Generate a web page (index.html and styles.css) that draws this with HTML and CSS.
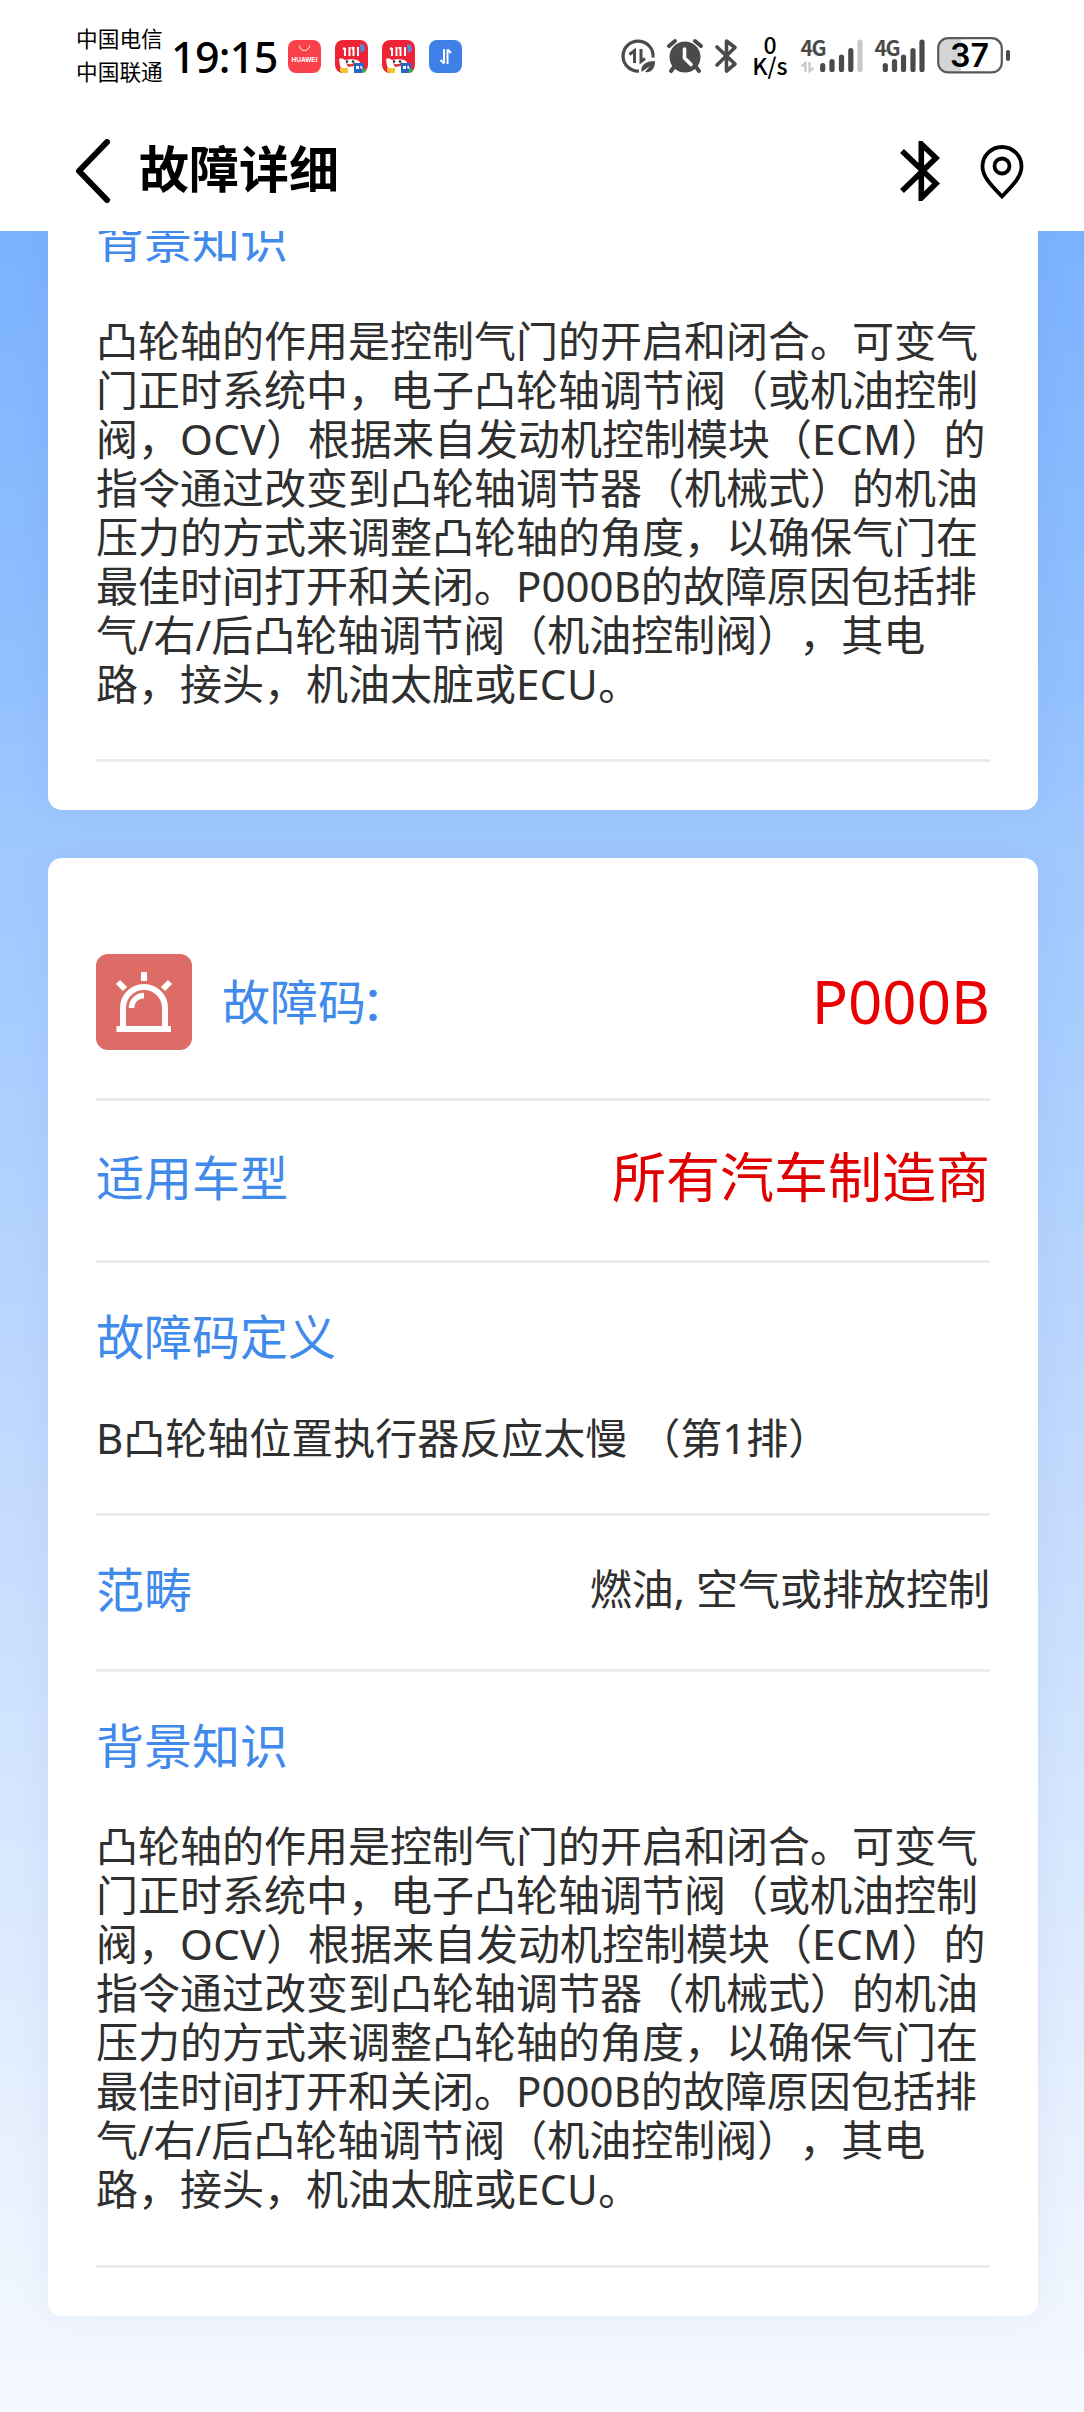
FILE: index.html
```html
<!DOCTYPE html>
<html lang="zh-CN">
<head>
<meta charset="utf-8">
<title>故障详细</title>
<link rel="stylesheet" href="styles.css">
</head>
<body>
<div class="screen">
  <header class="top">
    <div class="status">
      <div class="carriers"><span>中国电信</span><span>中国联通</span></div>
      <div class="time">19:15</div>
      <div class="apps">
        <svg class="app" viewBox="0 0 33 33"><rect width="33" height="33" rx="8" fill="#f9414b"/><path d="M11.500 5.500a5 5 0 0 0 10 0" fill="none" stroke="#fff" stroke-width="1"/><text x="16.500" y="21.500" class="brand" textLength="26" lengthAdjust="spacingAndGlyphs">HUAWEI</text></svg>
        <svg class="app" viewBox="0 0 33 33"><use href="#promo"/></svg>
        <svg class="app" viewBox="0 0 33 33"><use href="#promo"/></svg>
        <svg class="app" viewBox="0 0 33 33"><rect width="33" height="33" rx="8" fill="#3f7fe8"/><path d="M15 9v14.500M15 23.500l-3.500-3.500M18.500 24V9.500M18.500 9.500l3.500 3.500" fill="none" stroke="#fff" stroke-width="2"/></svg>
      </div>
      <div class="system">
        <svg class="s-data" viewBox="0 0 34 34" width="34" height="34"><path d="M18 32A15 15 0 1 1 32 18.500" fill="none" stroke="#4a4a4a" stroke-width="3.200"/><path d="M13.500 24V11.500L8.500 15.500M20 10v12.500l4-3" fill="none" stroke="#4a4a4a" stroke-width="3"/><path d="M20.500 33c-1-7 4-11 13.500-11 0 8-4 12-10 11l5-6-8.500 6z" fill="#4a4a4a"/></svg>
        <svg class="s-alarm" viewBox="0 0 36 34" width="36" height="34"><circle cx="18" cy="18" r="15.500" fill="#4a4a4a"/><path d="M2 7l6-5M34 7l-6-5M7 28l-3 4M29 28l3 4" stroke="#4a4a4a" stroke-width="4" stroke-linecap="round"/><path d="M17.500 10v9l6.500 6.500" fill="none" stroke="#fff" stroke-width="3.600" stroke-linecap="round"/></svg>
        <svg class="s-bt" viewBox="0 0 22 34" width="22" height="34"><path d="M2 8l18 17-8.500 7V2L20 8.500 2 26" fill="none" stroke="#4a4a4a" stroke-width="3.600" stroke-linejoin="round" stroke-linecap="round"/></svg>
        <div class="speed"><span>0</span><span>K/s</span></div>
        <svg class="s-sim" viewBox="0 0 62 34" width="62" height="34"><text x="-.5" y="16.500" class="net" textLength="26">4G</text><path d="M4.500 33v-9L.5 27.500M8.500 23v9l4-3" fill="none" stroke="#c8c8c8" stroke-width="2.200"/><path d="M21.700 26.500v4M31 22.500v8M40.500 18v12.500M49.800 11.500v19" stroke="#4a4a4a" stroke-width="5.200" stroke-linecap="round"/><path d="M59 3v27.500" stroke="#c8c8c8" stroke-width="5.200" stroke-linecap="round"/></svg>
        <svg class="s-sim2" viewBox="0 0 50 34" width="50" height="34"><text x="-.5" y="16.500" class="net" textLength="26">4G</text><path d="M10.300 26.500v4M19.500 22.500v8M28.500 18v12.500M38 11.500v19M47 3v27.500" stroke="#4a4a4a" stroke-width="5.200" stroke-linecap="round"/></svg>
        <svg class="s-batt" viewBox="0 0 74 37" width="74" height="37"><path d="M13 2h11v33H13A11 11 0 0 1 2 24V13A11 11 0 0 1 13 2z" fill="#d4d4d4"/><rect x="1.200" y="1.200" width="63.600" height="34.200" rx="10" fill="none" stroke="#5a5a5a" stroke-width="2.200"/><rect x="69" y="13" width="4" height="11" rx="2" fill="#4a4a4a"/><text x="32.500" y="29.500" class="level">37</text></svg>
      </div>
    </div>
    <nav class="bar">
      <svg class="back" viewBox="0 0 36 64" width="36" height="64"><path d="M32 3L4 32l28 29" fill="none" stroke="#000" stroke-width="6" stroke-linecap="round" stroke-linejoin="round"/></svg>
      <h1 class="title">故障详细</h1>
      <svg class="bt" viewBox="0 0 40 60" width="40" height="60"><path d="M2 10l34 32.500-14.700 14.500V3L36 17 2 50" fill="none" stroke="#000" stroke-width="5.600"/></svg>
      <svg class="pin" viewBox="0 0 44 54" width="44" height="54"><path d="M22 51.500C12 41 2.500 32 2.500 21.500a19.500 19.500 0 0 1 39 0C41.500 32 32 41 22 51.500z" fill="none" stroke="#000" stroke-width="3.800"/><circle cx="22" cy="21" r="7.500" fill="none" stroke="#000" stroke-width="3.800"/></svg>
    </nav>
  </header>

  <main class="list">
    <section class="card card-cut">
      <div class="block last">
        <h2 class="label">背景知识</h2>
        <p class="text">凸轮轴的作用是控制气门的开启和闭合。可变气<br>门正时系统中，电子凸轮轴调节阀（或机油控制<br>阀，<span class="lat">OCV</span>）根据来自发动机控制模块（<span class="lat">ECM</span>）的<br>指令通过改变到凸轮轴调节器（机械式）的机油<br>压力的方式来调整凸轮轴的角度，以确保气门在<br>最佳时间打开和关闭。P000B的故障原因包括排<br>气/右/后凸轮轴调节阀（机油控制阀），其电<br>路，接头，机油太脏或<span class="lat">ECU</span>。</p>
      </div>
    </section>

    <section class="card">
      <div class="row row-code">
        <svg class="siren" viewBox="0 0 96 96" width="96" height="96"><rect width="96" height="96" rx="12" fill="#dd6c67"/><path d="M27 73V54a21 21 0 0 1 42 0v19" fill="none" stroke="#fff" stroke-width="6"/><path d="M20.500 75h54.500M48 18v9M22 28l7 7M74 28l-7 7" fill="none" stroke="#fff" stroke-width="6"/><path d="M35.500 54A12.500 12.500 0 0 1 48 41.500" fill="none" stroke="#fff" stroke-width="5.500"/></svg>
        <span class="label">故障码<span class="colon">：</span></span>
        <span class="code">P000B</span>
      </div>
      <div class="row row-model"><span class="label">适用车型</span><span class="maker">所有汽车制造商</span></div>
      <div class="block block-def">
        <h2 class="label">故障码定义</h2>
        <p class="text">B凸轮轴位置执行器反应太慢 （第1排）</p>
      </div>
      <div class="row row-scope"><span class="label">范畴</span><span class="text">燃油, 空气或排放控制</span></div>
      <div class="block last">
        <h2 class="label">背景知识</h2>
        <p class="text">凸轮轴的作用是控制气门的开启和闭合。可变气<br>门正时系统中，电子凸轮轴调节阀（或机油控制<br>阀，<span class="lat">OCV</span>）根据来自发动机控制模块（<span class="lat">ECM</span>）的<br>指令通过改变到凸轮轴调节器（机械式）的机油<br>压力的方式来调整凸轮轴的角度，以确保气门在<br>最佳时间打开和关闭。P000B的故障原因包括排<br>气/右/后凸轮轴调节阀（机油控制阀），其电<br>路，接头，机油太脏或<span class="lat">ECU</span>。</p>
      </div>
    </section>
  </main>
</div>

<svg width="0" height="0" class="defs">
  <symbol id="promo" viewBox="0 0 33 33">
    <rect width="33" height="33" rx="8" fill="#ee2436"/>
    <path d="M25 4l4 1 1 5-4 3z" fill="#4b8fe0"/>
    <path d="M4 19c3-2 4 0 6 1 4-1 9-1 12 0 3 1 4 4 3 7l-3 6H9l-4-7z" fill="#fff"/>
    <path d="M11 23q5 3 9-1l-1 4-6 1z" fill="#d93636"/>
    <circle cx="12" cy="21.500" r="1.200" fill="#222"/><circle cx="18" cy="21.500" r="1.200" fill="#222"/>
    <path d="M10 8v8M14.500 7v9M18.500 7v9M23 7v9M8 9l2-1M16.500 8.500l2-1" stroke="#fff" stroke-width="2"/>
    <path d="M5 28h8v5H8a5 5 0 0 1-3-2z" fill="#f7c52e"/>
    <path d="M19 23h10v7l-3 3h-7z" fill="#2466c8"/>
    <path d="M27 29h5q-1 4-5 4z" fill="#45a84a"/>
    <path d="M21 26h3v3h-3zM25 28l1-3 2 4" fill="#fff"/>
  </symbol>
</svg>
</body>
</html>
```
FILE: styles.css
```css
* { box-sizing: border-box; margin: 0; padding: 0; }
body {
  width: 1084px;
  font-family: "Noto Sans", "Noto Sans CJK SC", sans-serif;
  color: #2f2f2f;
  background: #fff;
  text-spacing-trim: space-all;
}
.defs { display: none; }
.screen {
  height: 2412px;
  overflow: hidden;
  display: flex;
  flex-direction: column;
}
.top { flex: none; height: 231px; background: #fff; color: #000; }

/* status bar */
.status { height: 110px; padding: 0 72px 0 76px; display: flex; align-items: flex-start; }
.carriers {
  width: 95px; padding-top: 21px;
  display: flex; flex-direction: column;
  font: 21.7px/33px "Noto Sans CJK SC", sans-serif;
}
.time { width: 117px; margin-top: 27px; font: 500 43px/60px "Noto Sans", sans-serif; letter-spacing: -.7px; }
.apps { display: flex; gap: 14px; padding-top: 40px; }
.app { width: 33px; height: 33px; display: block; }
.brand { font: 700 6.5px "Liberation Sans", sans-serif; fill: #fff; text-anchor: middle; }
.system { margin-left: 159px; display: flex; align-items: flex-start; padding-top: 39px; }
.system svg { display: block; flex: none; overflow: visible; }
.s-data { margin-right: 12px; }
.s-alarm { margin-right: 12px; }
.s-bt { margin-right: 14px; }
.speed {
  width: 38px; margin: -5px 12px 0 0;
  display: flex; flex-direction: column; align-items: center;
  font: 500 23px/21px "Noto Sans CJK SC", sans-serif;
}
.s-sim { margin-right: 12px; }
.s-sim2 { margin-right: 12px; }
.s-batt { margin-top: -2px; }
.net { font: 700 21px "Noto Sans CJK SC", sans-serif; fill: #4a4a4a; }
.level { font: 600 32px Inter, sans-serif; text-anchor: middle; fill: #000; }

/* title bar */
.bar { height: 121px; padding: 0 60px 0 75px; display: flex; align-items: center; }
.back { margin-right: 28px; }
.title { flex: 1; padding-bottom: 9px; font: 700 50px/64px "Noto Sans CJK SC", sans-serif; }
.bt { margin-right: 40px; }
.pin { margin-top: 3px; }

/* scrolling list */
.list {
  flex: 1; min-height: 0; overflow: hidden;
  padding: 0 46px 0 48px;
  display: flex; flex-direction: column; gap: 48px;
  background: linear-gradient(#7bb2ff, #91c0ff 20%, #9fc8ff 28%, #a9ceff 38%, #c4dbfe 58%, #d4e6ff 72%, #e5effe 86%, #f0f6ff 95%, #f5f9ff);
}
.card {
  flex: none;
  padding: 48px;
  border-radius: 14px;
  background: #fff;
  box-shadow: 0 0 36px rgba(60, 60, 100, .06);
}
.card-cut { padding-top: 0; border-radius: 0 0 14px 14px; }
.row { display: flex; align-items: center; border-bottom: 3px solid #ebebeb; }
.row .label { flex: 1; }
.row-code { height: 195px; }
.row-code .label { padding-bottom: 6px; }
.row-code .code { padding-bottom: 3px; }
.row-model { height: 162px; }
.row-model .label { padding-bottom: 11px; }
.row-model .maker { padding-bottom: 7px; }
.row-scope { height: 156px; }
.row-scope .label { padding-bottom: 11px; }
.row-scope .text { padding-bottom: 8px; }
.siren { margin-right: 30px; }
.label { font: 400 48px/56px "Noto Sans CJK SC", sans-serif; color: #3f8aea; }
.colon { margin-left: -5px; }
.code { font-size: 60px; line-height: 70px; color: #ea0000; }
.maker { font-size: 54px; line-height: 64px; color: #e00000; }
.text { font-size: 42px; line-height: 49px; white-space: nowrap; }
.lat { letter-spacing: .5px; }
.block { display: flow-root; border-bottom: 3px solid #ebebeb; }
.block-def { height: 253px; padding-top: 43px; }
.block-def .text { margin-top: 51px; }
.last { height: 596px; padding-top: 43px; }
.last .text { margin-top: 50px; }
.card-cut .last { height: 531px; padding: 0; }
.card-cut .label { margin-top: -22px; }
.card-cut .text { margin-top: 51px; }
```
